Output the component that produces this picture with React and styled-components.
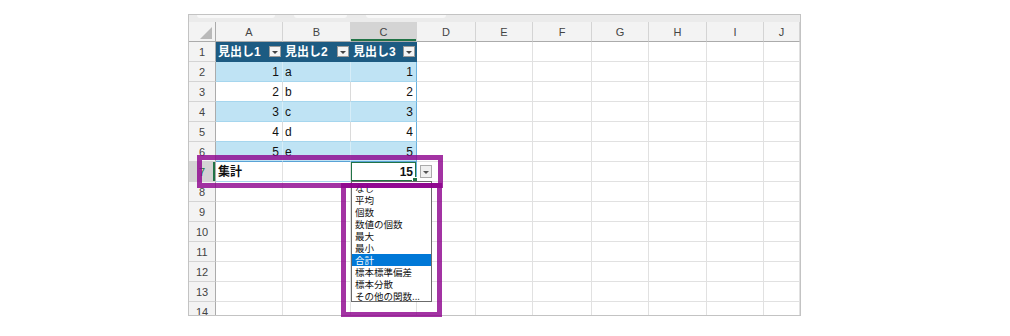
import React from "react";
import styled, { createGlobalStyle, css } from "styled-components";

const COLS = [27, 67, 68, 66, 59, 57, 59, 57, 58, 57, 36];
const LETTERS = ["A", "B", "C", "D", "E", "F", "G", "H", "I", "J"];
const FUNCS = [
  "なし",
  "平均",
  "個数",
  "数値の個数",
  "最大",
  "最小",
  "合計",
  "標本標準偏差",
  "標本分散",
  "その他の関数...",
];

const DATA = [
  ["1", "a", "1"],
  ["2", "b", "2"],
  ["3", "c", "3"],
  ["4", "d", "4"],
  ["5", "e", "5"],
];

const GlobalStyle = createGlobalStyle`
  html, body {
    margin: 0;
    background: #fff;
  }
  * { box-sizing: border-box; }
`;

const Page = styled.div`
  position: relative;
  width: 1010px;
  height: 336px;
  padding: 14px 0 0 188px;
  overflow: hidden;
  font-family: "Liberation Sans", "Noto Sans CJK JP", sans-serif;
`;

const Sheet = styled.div`
  width: 613px;
  height: 302px;
  border: 1px solid #c3c3c3;
  overflow: hidden;
  display: flex;
  flex-direction: column;
`;

const TopStrip = styled.div`
  flex: 0 0 7px;
  background: #ebebeb;
  display: flex;
  align-items: flex-start;
  gap: 19px;
  padding-left: 8px;
`;

const Pill = styled.div`
  width: ${(p) => p.$w}px;
  height: 3px;
  background: #f8f8f8;
  border-radius: 0 0 3px 3px;
`;

const Grid = styled.div`
  display: grid;
  grid-template-columns: ${COLS.map((c) => c + "px").join(" ")};
  grid-auto-rows: 20px;
`;

const Corner = styled.div`
  position: relative;
  background: #f3f3f3;
  border-right: 1px solid #ababab;
  border-bottom: 1px solid #ababab;

  &::after {
    content: "";
    position: absolute;
    right: 3px;
    bottom: 2px;
    border-left: 12px solid transparent;
    border-bottom: 12px solid #b9b9b9;
  }
`;

const ColHeader = styled.div`
  display: flex;
  align-items: center;
  justify-content: center;
  background: ${(p) => (p.$active ? "#d4d4d4" : "#f3f3f3")};
  border-right: 1px solid #d4d4d4;
  border-bottom: 1px solid #ababab;
  box-shadow: ${(p) => (p.$active ? "inset 0 -2px #217346" : "none")};
  font-size: 11px;
  color: #444;
`;

const RowHeader = styled.div`
  display: flex;
  align-items: center;
  justify-content: center;
  background: ${(p) => (p.$active ? "#d4d4d4" : "#f3f3f3")};
  border-right: 1px solid #ababab;
  border-bottom: 1px solid #d4d4d4;
  box-shadow: ${(p) => (p.$active ? "inset -2px 0 #217346" : "none")};
  font-size: 11px;
  color: ${(p) => (p.$active ? "#217346" : "#444")};
`;

const EmptyCell = styled.div`
  display: flex;
  align-items: center;
  border-right: 1px solid #e1e1e1;
  border-bottom: 1px solid #e1e1e1;
`;

const kinds = {
  head: css`
    background: #1d5b82;
    color: #fff;
    font-weight: bold;
    border-right: 1px solid #1d5b82;
    border-bottom: 1px solid #1d5b82;
  `,
  band: css`
    background: #bfe3f4;
    color: #111;
    border-right: 1px solid #d6edf8;
    border-bottom: 1px solid #a6d6ee;
  `,
  plain: css`
    background: #fff;
    color: #111;
    border-right: 1px solid #dadada;
    border-bottom: 1px solid #a6d6ee;
  `,
  total: css`
    background: #fff;
    color: #111;
    font-weight: bold;
    border-right: 1px solid #e1e1e1;
    border-bottom: 1px solid #a6d6ee;
  `,
};

const TableCell = styled.div`
  position: relative;
  display: flex;
  align-items: center;
  justify-content: ${(p) =>
    p.$align === "right" ? "flex-end" : p.$align === "split" ? "space-between" : "flex-start"};
  padding: ${(p) => (p.$align === "right" ? "0 3px 0 0" : "0 1px 0 2px")};
  font-size: 12px;
  line-height: 14px;
  white-space: nowrap;
  ${(p) => kinds[p.$kind]}
  ${(p) => p.$edge && "border-right-color: #69b2df;"}
  ${(p) => p.$lastData && "border-bottom-color: #5aa3d6;"}
  ${(p) =>
    p.$selected &&
    css`
      box-shadow: inset 0 0 0 1px #217346;
      &::after {
        content: "";
        position: absolute;
        right: -2px;
        bottom: -2px;
        width: 4px;
        height: 4px;
        background: #217346;
        border: 1px solid #fff;
      }
    `}
`;

const FilterButton = styled.span`
  position: relative;
  width: 12px;
  height: 11px;
  background: #f4f4f4;
  border: 1px solid #9a9a9a;
  flex: 0 0 auto;

  &::after {
    content: "";
    position: absolute;
    left: 2px;
    top: 4px;
    border-left: 3px solid transparent;
    border-right: 3px solid transparent;
    border-top: 3px solid #444;
  }
`;

const DropButton = styled.span`
  position: relative;
  width: 12px;
  height: 13px;
  margin-left: 3px;
  background: #f0f0f0;
  border: 1px solid #ababab;

  &::after {
    content: "";
    position: absolute;
    left: 2px;
    top: 5px;
    border-left: 3px solid transparent;
    border-right: 3px solid transparent;
    border-top: 3px solid #555;
  }
`;

const FuncList = styled.ul`
  position: absolute;
  top: 100%;
  left: 0;
  z-index: 5;
  width: 81px;
  height: 121px;
  margin: 0;
  padding: 0;
  list-style: none;
  background: #fff;
  border: 1px solid #6b6b6b;
  font-family: "Noto Sans CJK JP", sans-serif;
  font-weight: normal;
`;

const FuncItem = styled.li`
  height: 12px;
  line-height: 12px;
  padding-left: 3px;
  font-size: 9.5px;
  color: ${(p) => (p.$active ? "#fff" : "#111")};
  background: ${(p) => (p.$active ? "#0078d7" : "transparent")};
  white-space: nowrap;
`;

const Mark = styled.div`
  position: absolute;
  z-index: 10;
  left: ${(p) => p.$x}px;
  top: ${(p) => p.$y}px;
  width: ${(p) => p.$w}px;
  height: ${(p) => p.$h}px;
  border: 5px solid rgba(140, 0, 140, 0.8);
  pointer-events: none;
`;

function Blanks({ active }) {
  return LETTERS.slice(3).map((l, i) => (
    <EmptyCell key={l}>{active && i === 0 && <DropButton />}</EmptyCell>
  ));
}

export default function App() {
  return (
    <>
      <GlobalStyle />
      <Page>
        <Sheet>
          <TopStrip>
            <Pill $w={78} />
            <Pill $w={53} />
            <Pill $w={80} />
          </TopStrip>
          <Grid>
            <Corner />
            {LETTERS.map((l) => (
              <ColHeader key={l} $active={l === "C"}>
                {l}
              </ColHeader>
            ))}

            {/* header row of the table */}
            <RowHeader>1</RowHeader>
            {["見出し1", "見出し2", "見出し3"].map((h, i) => (
              <TableCell key={h} $kind="head" $align="split">
                {h}
                <FilterButton />
              </TableCell>
            ))}
            <Blanks />

            {DATA.map((r, i) => {
              const kind = i % 2 === 0 ? "band" : "plain";
              const last = i === DATA.length - 1;
              return (
                <React.Fragment key={i}>
                  <RowHeader>{i + 2}</RowHeader>
                  <TableCell $kind={kind} $align="right" $lastData={last}>
                    {r[0]}
                  </TableCell>
                  <TableCell $kind={kind} $lastData={last}>
                    {r[1]}
                  </TableCell>
                  <TableCell $kind={kind} $align="right" $edge $lastData={last}>
                    {r[2]}
                  </TableCell>
                  <Blanks />
                </React.Fragment>
              );
            })}

            {/* total row */}
            <RowHeader $active>7</RowHeader>
            <TableCell $kind="total">集計</TableCell>
            <TableCell $kind="total" />
            <TableCell $kind="total" $align="right" $edge $selected>
              15
              <FuncList>
                {FUNCS.map((f) => (
                  <FuncItem key={f} $active={f === "合計"}>
                    {f}
                  </FuncItem>
                ))}
              </FuncList>
            </TableCell>
            <Blanks active />

            {[8, 9, 10, 11, 12, 13, 14].map((n) => (
              <React.Fragment key={n}>
                <RowHeader>{n}</RowHeader>
                <EmptyCell />
                <EmptyCell />
                <EmptyCell />
                <Blanks />
              </React.Fragment>
            ))}
          </Grid>
        </Sheet>
        <Mark $x={197} $y={155} $w={246} $h={33} />
        <Mark $x={341} $y={183} $w={101} $h={134} />
      </Page>
    </>
  );
}
